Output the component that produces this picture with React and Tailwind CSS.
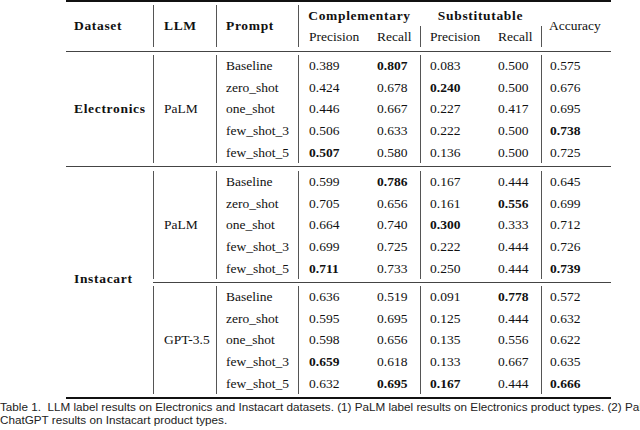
import React from "react";

const electronics = [
  ["Baseline", "0.389", "0.807", "0.083", "0.500", "0.575", [2]],
  ["zero_shot", "0.424", "0.678", "0.240", "0.500", "0.676", [3]],
  ["one_shot", "0.446", "0.667", "0.227", "0.417", "0.695", []],
  ["few_shot_3", "0.506", "0.633", "0.222", "0.500", "0.738", [5]],
  ["few_shot_5", "0.507", "0.580", "0.136", "0.500", "0.725", [1]],
];

const instaPalm = [
  ["Baseline", "0.599", "0.786", "0.167", "0.444", "0.645", [2]],
  ["zero_shot", "0.705", "0.656", "0.161", "0.556", "0.699", [4]],
  ["one_shot", "0.664", "0.740", "0.300", "0.333", "0.712", [3]],
  ["few_shot_3", "0.699", "0.725", "0.222", "0.444", "0.726", []],
  ["few_shot_5", "0.711", "0.733", "0.250", "0.444", "0.739", [1, 5]],
];

const instaGpt = [
  ["Baseline", "0.636", "0.519", "0.091", "0.778", "0.572", [4]],
  ["zero_shot", "0.595", "0.695", "0.125", "0.444", "0.632", []],
  ["one_shot", "0.598", "0.656", "0.135", "0.556", "0.622", []],
  ["few_shot_3", "0.659", "0.618", "0.133", "0.667", "0.635", [1]],
  ["few_shot_5", "0.632", "0.695", "0.167", "0.444", "0.666", [2, 3, 5]],
];

function Num({ v, bold }) {
  return <span className={bold ? "font-bold" : ""}>{v}</span>;
}

function Row({ r }) {
  const b = r[6];
  return (
    <div className="flex h-[21.7px]">
      <div className="w-[82px] border-l border-[#555] pl-[9px] flex items-center">{r[0]}</div>
      <div className="w-[69px] border-l border-[#555] pl-[10px] flex items-center"><Num v={r[1]} bold={b.includes(1)} /></div>
      <div className="w-[53px] pl-[10px] flex items-center"><Num v={r[2]} bold={b.includes(2)} /></div>
      <div className="w-[69px] border-l border-[#555] pl-[9px] flex items-center"><Num v={r[3]} bold={b.includes(3)} /></div>
      <div className="w-[52px] pl-[9px] flex items-center"><Num v={r[4]} bold={b.includes(4)} /></div>
      <div className="w-[70px] border-l border-[#555] pl-[8px] flex items-center"><Num v={r[5]} bold={b.includes(5)} /></div>
    </div>
  );
}

function Sub({ llm, rows, pt }) {
  return (
    <div className={pt + " pb-[2.5px]"}>
      <div className="flex">
        <div className="w-[63px] border-l border-[#555] pl-[10px] flex items-center">{llm}</div>
        <div className="flex flex-col">
          {rows.map((r, i) => (
            <Row key={i} r={r} />
          ))}
        </div>
      </div>
    </div>
  );
}

export default function App() {
  return (
    <div className="w-[640px] h-[430px] overflow-hidden bg-white text-[#111]">
      <div className="ml-[66px] w-[545px] font-['Liberation_Serif',serif] text-[13.5px] leading-none">
        <div className="h-[2px] bg-[#111]" />
        {/* header */}
        <div className="pt-[3px] pb-[4px]">
          <div className="grid grid-cols-[87px_63px_82px_69px_53px_69px_52px_70px] grid-rows-[21px_21px]">
            <div className="col-start-1 row-start-1 row-span-2 flex items-center pl-[8px] font-bold tracking-[0.05em]">Dataset</div>
            <div className="col-start-2 row-start-1 row-span-2 flex items-center pl-[10px] font-bold tracking-[0.05em] border-l border-[#555]">LLM</div>
            <div className="col-start-3 row-start-1 row-span-2 flex items-center pl-[9px] font-bold tracking-[0.05em] border-l border-[#555]">Prompt</div>
            <div className="col-start-4 col-span-2 row-start-1 flex items-center justify-center font-bold tracking-[0.05em] border-l border-[#555]">Complementary</div>
            <div className="col-start-6 col-span-2 row-start-1 flex items-center justify-center font-bold tracking-[0.05em]">Substitutable</div>
            <div className="col-start-8 row-start-2 border-l border-[#555]" />
            <div className="col-start-8 row-start-1 row-span-2 flex items-center pl-[8px]">Accuracy</div>
            <div className="col-start-4 row-start-2 flex items-center pl-[10px] border-l border-[#555]">Precision</div>
            <div className="col-start-5 row-start-2 flex items-center pl-[10px]">Recall</div>
            <div className="col-start-6 row-start-2 flex items-center pl-[9px] border-l border-[#555]">Precision</div>
            <div className="col-start-7 row-start-2 flex items-center pl-[9px]">Recall</div>
          </div>
        </div>
        <div className="h-px bg-[#444]" />
        {/* Electronics */}
        <div className="flex">
          <div className="w-[87px] flex items-center pl-[8px] font-bold tracking-[0.05em]">Electronics</div>
          <div className="flex flex-col">
            <Sub llm="PaLM" rows={electronics} pt="pt-[3px]" />
          </div>
        </div>
        <div className="h-px bg-[#444]" />
        {/* Instacart */}
        <div className="flex">
          <div className="w-[87px] flex items-center pl-[8px] pb-[6px] font-bold tracking-[0.05em]">Instacart</div>
          <div className="flex flex-col">
            <Sub llm="PaLM" rows={instaPalm} pt="pt-[4px]" />
            <div className="h-px bg-[#444]" />
            <Sub llm="GPT-3.5" rows={instaGpt} pt="pt-[3px]" />
          </div>
        </div>
        <div className="h-[2px] bg-[#111]" />
      </div>
      <div className="mt-[1px] font-['Liberation_Sans',sans-serif] text-[11.7px] leading-[13px] text-[#222] whitespace-nowrap">
        <div>Table 1.{"\u00a0 "}LLM label results on Electronics and Instacart datasets. (1) PaLM label results on Electronics product types. (2) PaLM and</div>
        <div>ChatGPT results on Instacart product types.</div>
      </div>
    </div>
  );
}
